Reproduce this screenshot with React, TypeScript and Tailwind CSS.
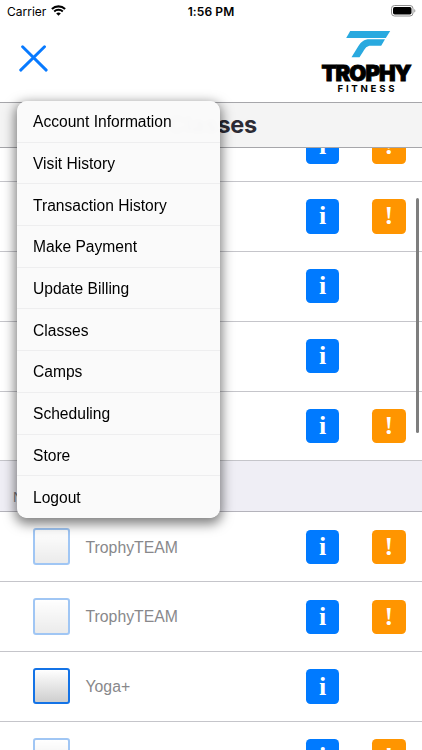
const menuItems = [
  "Account Information",
  "Visit History",
  "Transaction History",
  "Make Payment",
  "Update Billing",
  "Classes",
  "Camps",
  "Scheduling",
  "Store",
  "Logout",
];

type ClassRow = { id: number; name: string; enabled: boolean; alert: boolean };

const earlierClasses: ClassRow[] = [
  { id: 1, name: "", enabled: false, alert: true },
  { id: 2, name: "", enabled: false, alert: true },
  { id: 3, name: "", enabled: false, alert: false },
  { id: 4, name: "", enabled: false, alert: false },
  { id: 5, name: "", enabled: false, alert: true },
];

const laterClasses: ClassRow[] = [
  { id: 6, name: "TrophyTEAM", enabled: false, alert: true },
  { id: 7, name: "TrophyTEAM", enabled: false, alert: true },
  { id: 8, name: "Yoga+", enabled: true, alert: false },
  { id: 9, name: "", enabled: false, alert: true },
];

export default function App() {
  return (
    <div className="relative flex h-[750px] w-[422px] flex-col overflow-hidden bg-white font-['Liberation_Sans',sans-serif]">
      <StatusBar />

      {/* Header */}
      <header className="flex h-20 shrink-0 items-start justify-between pl-[19px] pr-[10px]">
        <button aria-label="Close menu" className="mt-[23px]">
          <svg width="29" height="27" viewBox="0 0 29 27" fill="none" stroke="#087aff" strokeWidth="2.9" strokeLinecap="round">
            <path d="M3.6 1.8 27.2 25.1M25.5 1.8 1.7 25.1" />
          </svg>
        </button>
        <Logo />
      </header>

      {/* Title */}
      <div className="flex h-[46px] shrink-0 items-center justify-center border-y border-[#a6a6aa] bg-[#f4f4f4] pl-[3px]">
        <h1 className="font-['Inter',sans-serif] text-[23.5px] font-bold leading-none tracking-[-0.3px] text-[#2c2b35]">
          Classes
        </h1>
      </div>

      {/* Class list */}
      <main className="flex min-h-0 flex-1 flex-col overflow-hidden">
        <div className="-mt-[36px] shrink-0">
          {earlierClasses.map((c) => (
            <Row key={c.id} item={c} />
          ))}
        </div>
        <div className="flex h-[51px] shrink-0 items-end border-b border-[#b4b3bb] bg-[#efeef5] pb-[6px] pl-[13px]">
          <span className="text-[14px] leading-4 text-[#77777c]">N</span>
        </div>
        <div className="shrink-0">
          {laterClasses.map((c) => (
            <Row key={c.id} item={c} />
          ))}
        </div>
      </main>

      {/* Scroll indicator */}
      <div className="absolute left-[415.5px] top-[198px] h-[235px] w-[3px] rounded-full bg-[#7e7e7e]" />

      {/* Dropdown menu */}
      <nav className="absolute left-[17px] top-[101px] w-[203px] rounded-[10px] bg-[#fafafa]/99 shadow-[0_4px_12px_2px_rgba(0,0,0,0.5)] backdrop-blur-[2px]">
        {menuItems.map((label, i) => (
          <div
            key={label}
            className={`flex h-[41.7px] items-center pl-4 pt-px text-[15.6px] text-black ${
              i < menuItems.length - 1 ? "border-b border-[#eeeeef]" : ""
            }`}
          >
            {label}
          </div>
        ))}
      </nav>
    </div>
  );
}

function StatusBar() {
  return (
    <div className="grid h-[22px] shrink-0 grid-cols-3 items-center px-[7px] pt-px font-['Inter',sans-serif] text-[12px] leading-none text-black">
      <div className="flex items-center gap-[5px]">
        <span>Carrier</span>
        <svg width="15" height="11" viewBox="0 0 15 11" className="-mt-[3px]">
          <path d="M.9 4C4.6.5 10.4.5 14.1 4" fill="none" stroke="black" strokeWidth="2.1" />
          <path d="M3.2 6.5C5.6 4.2 9.4 4.2 11.8 6.5" fill="none" stroke="black" strokeWidth="1.9" />
          <path d="M5.2 8.4C6.5 7.2 8.5 7.2 9.8 8.4L7.5 10.7Z" />
        </svg>
      </div>
      <span className="text-center font-semibold tracking-[0.1px]">1:56 PM</span>
      <div className="flex justify-end">
        <svg width="25" height="12" viewBox="0 0 25 12" className="-mr-[1px] -mt-px">
          <rect x=".5" y=".5" width="21.5" height="10.5" rx="3" fill="none" stroke="#8e8e8e" />
          <rect x="2" y="2" width="18.5" height="7.5" rx="1.7" />
          <path d="M23.3 4v3.6c1.4-.5 1.4-3.1 0-3.6Z" fill="#8e8e8e" />
        </svg>
      </div>
    </div>
  );
}

function Logo() {
  return (
    <svg width="92" height="68" viewBox="0 0 92 68" className="mt-[7px] overflow-visible" aria-label="Trophy Fitness">
      <path d="M30.2 2H70.2L65.8 9H26.2Z" fill="#29a9df" />
      <path d="M65 10.2 61.2 16.8H51C46.6 16.8 45.3 19.2 43.2 22.4L39.5 28.3H31.5L37.8 18C41 12.7 44 10.2 49.5 10.2Z" fill="#29a9df" />
      <text
        x="1.5"
        y="51.6"
        textLength="89"
        lengthAdjust="spacingAndGlyphs"
        className="font-['Inter',sans-serif] text-[21px] font-black tracking-[-1px]"
        stroke="black"
        strokeWidth=".9"
      >
        TROPHY
      </text>
      <text x="17.5" y="62.6" textLength="57" className="font-['Inter',sans-serif] text-[9.6px] font-bold">
        FITNESS
      </text>
    </svg>
  );
}

function Row({ item }: { item: ClassRow }) {
  return (
    <div className="flex h-[69.9px] items-center border-b border-[#c5c5ca] pl-[33px]">
      <div
        className={`-mt-px size-[36.5px] shrink-0 rounded-[3px] border-2 border-[#1473e6] bg-linear-to-b from-white to-[#cecece] ${
          item.enabled ? "" : "opacity-40"
        }`}
      />
      <span className="ml-4 flex-1 pt-px text-[15.8px] text-[#88888b]">{item.name}</span>
      <div className="flex w-[116px] gap-[33px]">
        <div className="flex h-[34.5px] w-[33px] items-center justify-center rounded-[4.5px] bg-[#007aff] font-['Liberation_Serif',serif] text-[26px] font-bold leading-none text-white">
          i
        </div>
        {item.alert && (
          <div className="flex h-[34.5px] w-[33.5px] items-center justify-center rounded-[4.5px] bg-[#ff9500] font-['Liberation_Serif',serif] text-[26px] font-bold leading-none text-white">
            !
          </div>
        )}
      </div>
    </div>
  );
}
